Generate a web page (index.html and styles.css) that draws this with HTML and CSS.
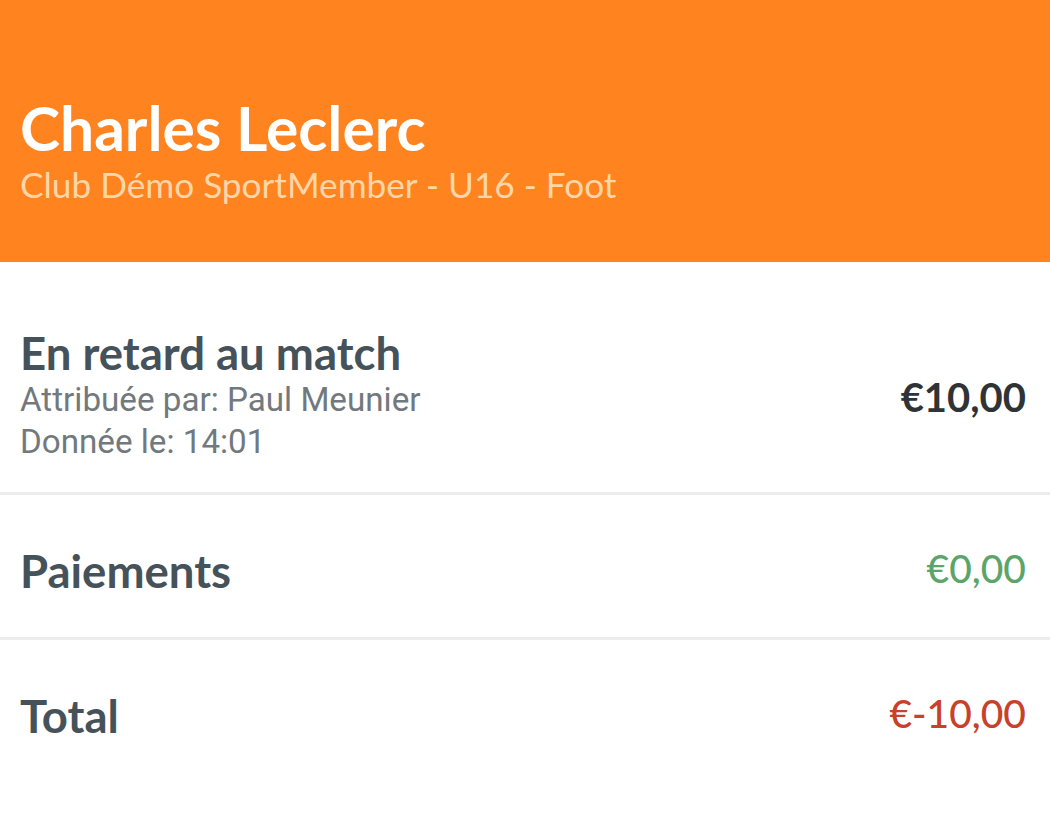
FILE: index.html
```html
<!DOCTYPE html>
<html lang="fr">
<head>
<meta charset="utf-8">
<title>Amende</title>
<link rel="stylesheet" href="styles.css">
</head>
<body>
<header class="header">
  <h1 class="header-title">Charles Leclerc</h1>
  <div class="header-sub">Club Démo SportMember - U16 - Foot</div>
</header>
<main class="list">
  <section class="row row-fine">
    <div class="row-left">
      <div class="row-title">En retard au match</div>
      <div class="row-detail">Attribuée par: Paul Meunier</div>
      <div class="row-detail">Donnée le: 14:01</div>
    </div>
    <div class="amount amount-dark">€10,00</div>
  </section>
  <section class="row row-simple row-pay">
    <div class="row-title">Paiements</div>
    <div class="amount amount-green">€0,00</div>
  </section>
  <section class="row row-simple row-last">
    <div class="row-title">Total</div>
    <div class="amount amount-red">€-10,00</div>
  </section>
</main>
</body>
</html>
```
FILE: styles.css
```css
* { box-sizing: border-box; }
html, body { margin: 0; padding: 0; background: #ffffff; }
body { font-family: "Lato", "Roboto", sans-serif; }

.header {
  background: #ff831f;
  height: 262px;
  padding: 96px 20px 0 20px;
}
.header-title {
  margin: 0;
  font-family: "Lato", sans-serif;
  font-weight: 700;
  font-size: 60.5px;
  line-height: 64px;
  color: #ffffff;
}
.header-sub {
  margin-top: 4px;
  font-family: "Lato", sans-serif;
  font-weight: 400;
  font-size: 35.2px;
  line-height: 40px;
  color: #ffd6a8;
}

.list { display: flex; flex-direction: column; }

.row {
  display: flex;
  align-items: center;
  justify-content: space-between;
  padding: 0 24px 0 20px;
  border-bottom: 3px solid #ececec;
}
.row-fine { height: 233px; padding-top: 36px; }
.row-simple { height: 145px; padding-top: 6px; }
.row-pay { padding-top: 10px; }
.row-last { border-bottom: none; }

.row-left { display: flex; flex-direction: column; }

.row-title {
  font-family: "Lato", sans-serif;
  font-weight: 700;
  font-size: 45.5px;
  line-height: 52px;
  color: #46525a;
}
.row-detail {
  font-family: "Roboto", sans-serif;
  font-size: 33.2px;
  line-height: 42px;
  color: #72797e;
}

.amount {
  font-family: "Lato", sans-serif;
  font-size: 39px;
  line-height: 48px;
}
.amount-dark { font-weight: 700; font-size: 40px; color: #2f3336; padding-top: 4px; }
.amount-green { font-weight: 500; color: #5ca56a; padding-bottom: 6px; }
.amount-red { font-weight: 500; color: #c8412a; padding-bottom: 6px; }
```
